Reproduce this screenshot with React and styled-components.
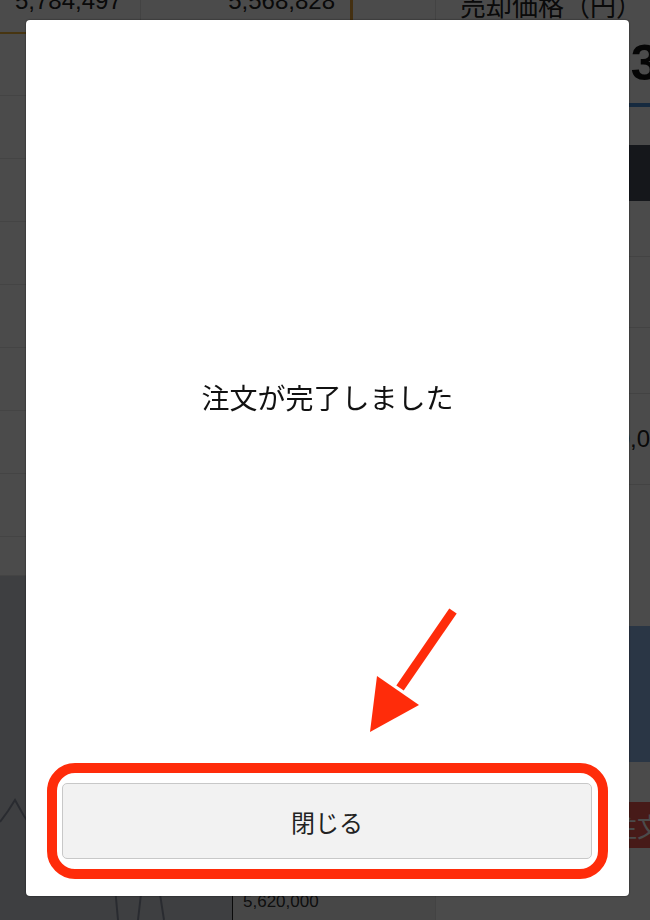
import React from 'react';
import styled, { createGlobalStyle } from 'styled-components';

const GlobalStyle = createGlobalStyle`
  html, body {
    margin: 0;
    padding: 0;
  }
  body {
    background: #fff;
    font-family: "Liberation Sans", "Noto Sans CJK JP", sans-serif;
    color: #333;
    overflow: hidden;
  }
`;

/* ---------- page underneath the dialog ---------- */

const Page = styled.div`
  width: 650px;
  height: 920px;
  overflow: hidden;
  display: grid;
  grid-template-columns: 435px 1fr;
  grid-template-rows: 920px;
`;

const LeftColumn = styled.div`
  display: flex;
  flex-direction: column;
  overflow: hidden;
`;

const PriceRow = styled.div`
  height: 32px;
  flex-shrink: 0;
  display: grid;
  grid-template-columns: 140px 210px 1fr;
  border-bottom: 2px solid #f0b43c;
`;

const PriceCell = styled.div`
  font-size: 24px;
  line-height: 24px;
  margin-top: -11px;
  padding: 0 15px;
  white-space: nowrap;
  text-align: ${(p) => p.$align || 'left'};
  border-left: ${(p) => p.$accent ? '3px solid #e8a33a' : p.$divider ? '1px solid #e2e2e2' : 'none'};
  color: #222;
`;

const TableRow = styled.div`
  height: ${(p) => p.$h || 61}px;
  border-bottom: 1px solid #e6e6e6;
  flex-shrink: 0;
`;

const ChartArea = styled.div`
  flex: 1;
  min-height: 0;
  background: #d2d5dc;
  display: grid;
  grid-template-columns: 232px 1fr;
`;

const ChartPlot = styled.div`
  overflow: hidden;
  min-height: 0;

  svg {
    display: block;
  }
`;

const AxisArea = styled.div`
  background: #f2f2f2;
  display: flex;
  flex-direction: column;
  justify-content: flex-end;
  min-height: 0;
`;

const AxisTick = styled.div`
  height: 27px;
  border-left: 1px solid #222;
  padding-left: 10px;
  font-size: 17px;
  line-height: 17px;
  color: #333;
  white-space: nowrap;
`;

const RightColumn = styled.div`
  display: flex;
  flex-direction: column;
  border-left: 1px solid #e2e2e2;
  overflow: hidden;
`;

const PanelTitle = styled.div`
  font-family: "Noto Sans CJK JP", sans-serif;
  font-size: 26px;
  line-height: 26px;
  margin-top: -8px;
  padding-left: 24px;
  color: #222;
  height: 28px;
  flex-shrink: 0;
  white-space: nowrap;
`;

const BigPrice = styled.div`
  font-size: 50px;
  font-weight: 700;
  text-align: right;
  padding-right: 1px;
  line-height: 54px;
  height: 54px;
  margin-top: 16px;
  color: #111;
  white-space: nowrap;
  flex-shrink: 0;
`;

const TabLine = styled.div`
  height: 4px;
  margin-top: 13px;
  flex-shrink: 0;
  background: #4b8fd6;
`;

const DarkButton = styled.div`
  height: 56px;
  margin-top: 38px;
  flex-shrink: 0;
  background: #474f5e;
`;

const PanelRow = styled.div`
  height: ${(p) => p.$h}px;
  border-bottom: 1px solid #e4e4e4;
  display: flex;
  align-items: center;
  padding-left: 134px;
  font-size: 24px;
  color: #222;
  flex-shrink: 0;
  white-space: nowrap;
`;

const BlueBlock = styled.div`
  height: 136px;
  margin-top: 141px;
  flex-shrink: 0;
  background: #8fb6ea;
`;

const RedButton = styled.div`
  height: 46px;
  margin-top: 40px;
  flex-shrink: 0;
  background: #f05a52;
  color: #fff;
  font-family: "Noto Sans CJK JP", sans-serif;
  font-size: 26px;
  display: flex;
  align-items: center;
  padding-left: 175px;
  white-space: nowrap;
`;

/* ---------- dialog ---------- */

const Overlay = styled.div`
  position: fixed;
  inset: 0;
  background: rgba(0, 0, 0, 0.705);
  display: flex;
  padding: 20px 21px 24px 26px;
  box-sizing: border-box;
`;

const Modal = styled.div`
  flex: 1;
  position: relative;
  background: #fff;
  border-radius: 4px;
  box-shadow: 0 0 2px rgba(0, 0, 0, 0.7);
  display: flex;
  flex-direction: column;
`;

const Message = styled.div`
  flex: 1;
  display: flex;
  align-items: center;
  justify-content: center;
  font-family: "Noto Sans CJK JP", sans-serif;
  font-size: 28px;
  color: #111;
`;

const Footer = styled.div`
  padding: 9px 37px 37px 36px;
`;

const ButtonWrap = styled.div`
  position: relative;
`;

const CloseButton = styled.button`
  display: block;
  width: 100%;
  height: 76px;
  background: #f2f2f2;
  border: 1px solid #c8c8c8;
  border-radius: 5px;
  font-family: "Noto Sans CJK JP", sans-serif;
  font-size: 24px;
  color: #222;
  cursor: pointer;
`;

const Highlight = styled.div`
  position: absolute;
  top: -20px;
  bottom: -20px;
  left: -15px;
  right: -16px;
  border: 10px solid #ff2c0a;
  border-radius: 28px;
  pointer-events: none;
`;

const ArrowLayer = styled.svg`
  position: absolute;
  top: 0;
  left: 0;
  pointer-events: none;
`;

const rowHeights = [61, 62, 62, 62, 62, 62, 62, 62, 38];

export default function App() {
  return (
    <>
      <GlobalStyle />
      <Page>
        <LeftColumn>
          <PriceRow>
            <PriceCell>5,784,497</PriceCell>
            <PriceCell $align="right" $divider>5,568,828</PriceCell>
            <PriceCell $accent />
          </PriceRow>
          {rowHeights.map((h, i) => (
            <TableRow key={i} $h={h} />
          ))}
          <ChartArea>
            <ChartPlot>
              <svg width="232" height="344" viewBox="0 0 232 344">
                <polyline
                  points="0,246 8,235 15,224 24,240 40,262 70,252 100,270 114,300 118,344"
                  fill="none"
                  stroke="#8c93a3"
                  strokeWidth="2"
                />
                <polyline
                  points="138,344 141,318 150,300 160,318 164,344"
                  fill="none"
                  stroke="#8c93a3"
                  strokeWidth="2"
                />
              </svg>
            </ChartPlot>
            <AxisArea>
              <AxisTick>5,620,000</AxisTick>
            </AxisArea>
          </ChartArea>
        </LeftColumn>
        <RightColumn>
          <PanelTitle>売却価格（円）</PanelTitle>
          <BigPrice>5,573,283</BigPrice>
          <TabLine />
          <DarkButton />
          <PanelRow $h={55} />
          <PanelRow $h={70} />
          <PanelRow $h={65} />
          <PanelRow $h={90}>5,500,000</PanelRow>
          <BlueBlock />
          <RedButton>注文</RedButton>
        </RightColumn>
      </Page>

      <Overlay>
        <Modal>
          <Message>注文が完了しました</Message>
          <Footer>
            <ButtonWrap>
              <CloseButton type="button">閉じる</CloseButton>
              <Highlight />
            </ButtonWrap>
          </Footer>
          <ArrowLayer width="603" height="876" viewBox="0 0 603 876">
            <line x1="427" y1="591" x2="374" y2="668" stroke="#ff2c0a" strokeWidth="9" strokeLinecap="butt" />
            <polygon points="344,712 351,656 393,685" fill="#ff2c0a" />
          </ArrowLayer>
        </Modal>
      </Overlay>
    </>
  );
}
